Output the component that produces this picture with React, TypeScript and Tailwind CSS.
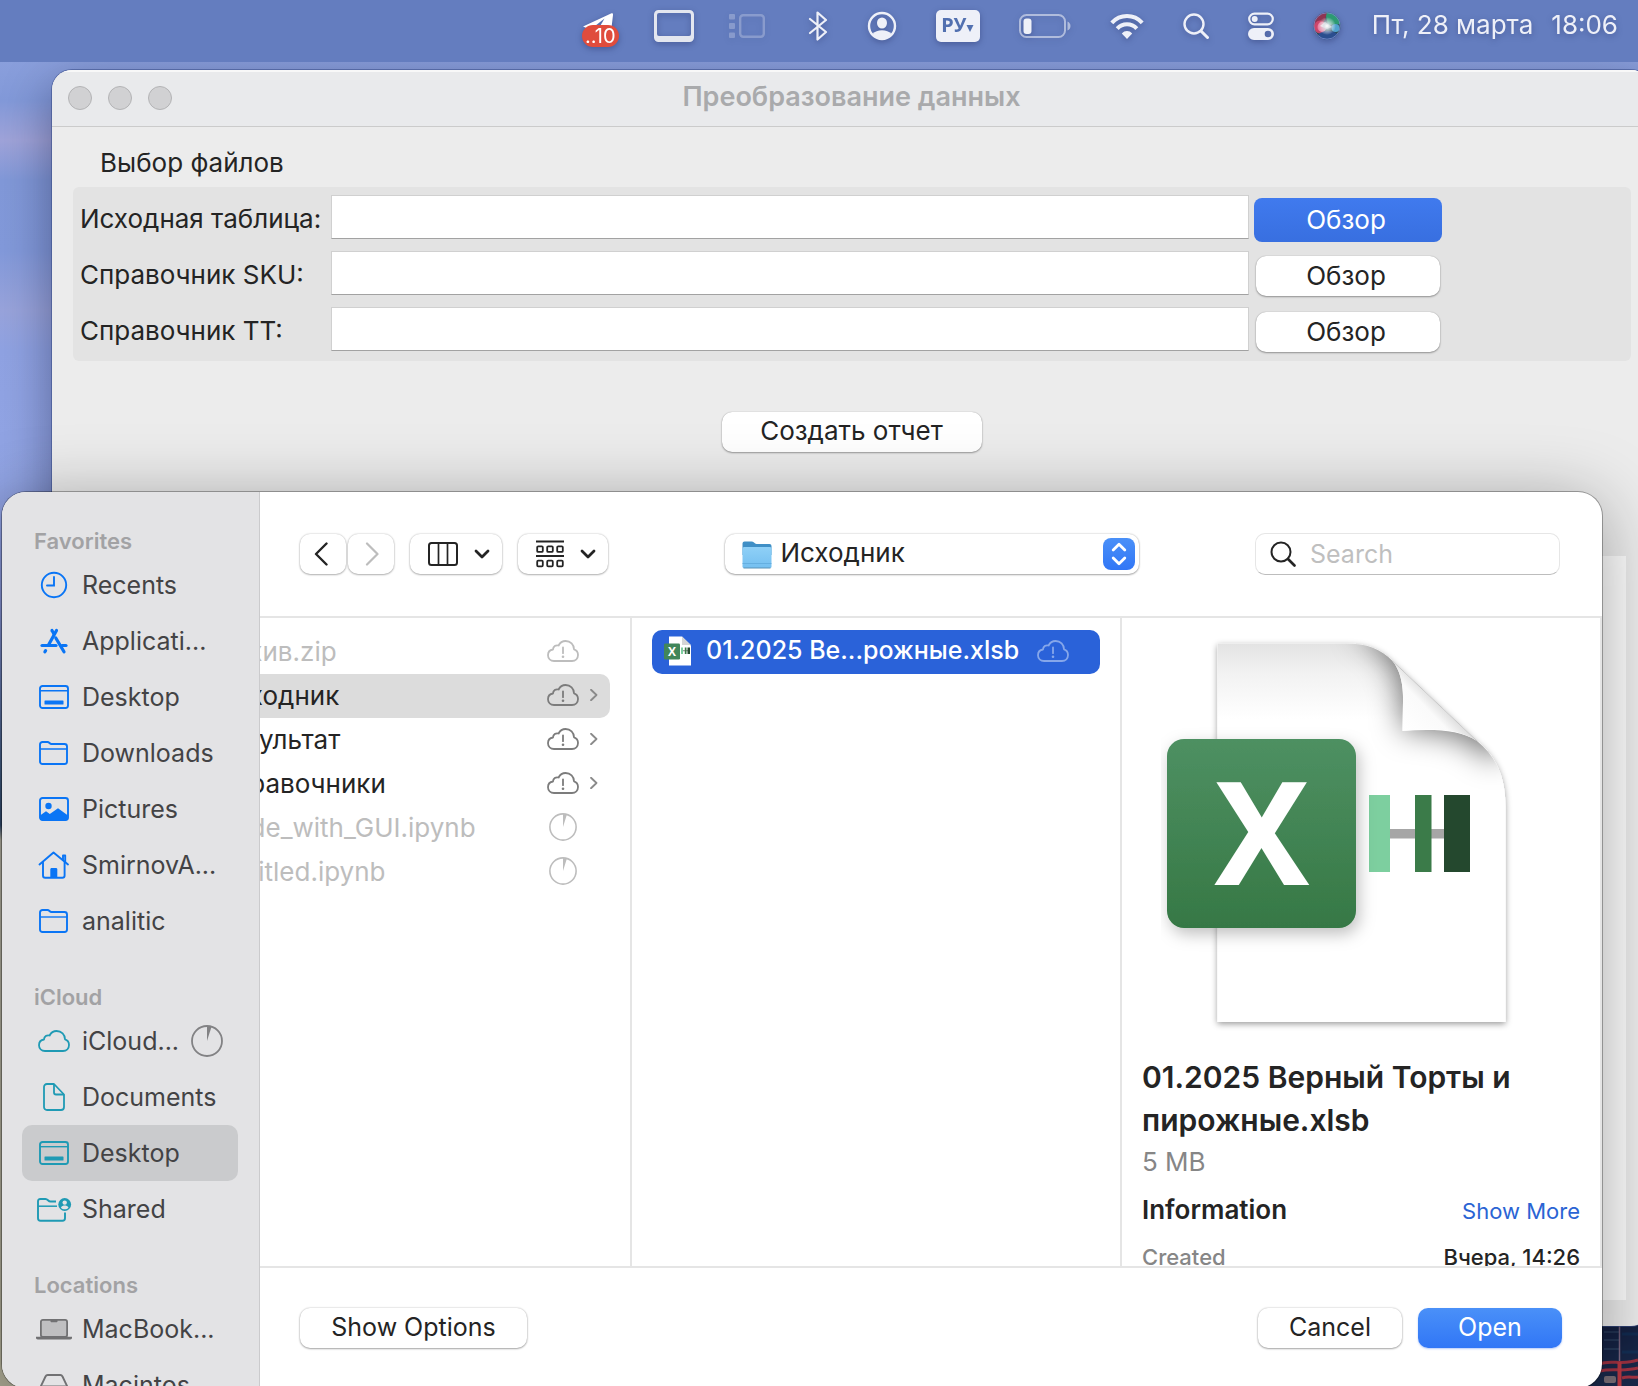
import React from "react";

type IconProps = { className?: string };

function CloudIcon({ className = "", alert = false }: IconProps & { alert?: boolean }) {
  return (
    <svg viewBox="0 0 32 22" className={`h-[22px] w-8 shrink-0 ${className}`} fill="none" stroke="currentColor" strokeWidth="1.8" strokeLinejoin="round" aria-hidden="true">
      <path d="M7 21C3.6 21 1 18.6 1 15.3C1 12.2 3.200 9.900 6 9.500C6.100 6.400 8.700 4.700 11.600 5.500C13 2.600 15.500 1 18.600 1C23.400 1 27 4.500 27 9.300C29.500 10 31 12.300 31 15C31 18.500 28.500 21 25 21Z" />
      {alert && (
        <>
          <path d="M16 7.500V13.200" strokeLinecap="round" />
          <circle cx="16" cy="16.700" r="1.300" fill="currentColor" stroke="none" />
        </>
      )}
    </svg>
  );
}

function PieIcon({ className = "" }: IconProps) {
  return (
    <svg viewBox="0 0 32 32" className={`shrink-0 ${className}`} aria-hidden="true">
      <circle cx="16" cy="16" r="15" fill="none" stroke="currentColor" strokeWidth="1.800" />
      <path d="M16 16V1L20.500 1.800Z" fill="currentColor" />
    </svg>
  );
}

function ClockIcon() {
  return (
    <svg viewBox="0 0 28 28" className="size-7" fill="none" stroke="currentColor" strokeWidth="1.900" strokeLinecap="round" aria-hidden="true">
      <circle cx="14" cy="14" r="12.200" />
      <path d="M14 6V14.500H7" />
    </svg>
  );
}

function AppsIcon() {
  return (
    <svg viewBox="0 0 28 26" className="h-[26px] w-7" fill="none" stroke="currentColor" strokeWidth="3.200" strokeLinecap="round" aria-hidden="true">
      <path d="M16.500 2.500L8.500 17" />
      <path d="M12 2.500L14 6" />
      <path d="M15.800 10L24 23.800" />
      <path d="M2 17.500H16" />
      <path d="M22 17.500H26" />
      <path d="M5.600 22.600L4.900 23.800" />
    </svg>
  );
}

function DesktopIcon() {
  return (
    <svg viewBox="0 0 30 24" className="h-6 w-[30px]" fill="none" stroke="currentColor" strokeWidth="1.900" aria-hidden="true">
      <rect x="1" y="1" width="28" height="22" rx="2.500" />
      <path d="M1 5.700H29" strokeWidth="1.400" />
      <rect x="5.500" y="15.500" width="19" height="4" rx="0.600" fill="currentColor" stroke="none" />
    </svg>
  );
}

function FolderIcon() {
  return (
    <svg viewBox="0 0 30 24" className="h-6 w-[30px]" fill="none" stroke="currentColor" strokeWidth="1.900" strokeLinejoin="round" aria-hidden="true">
      <path d="M1 3.500C1 2 2 1 3.500 1H8.500C10.500 1 10.500 3 12.500 3H25.500C27 3 28 4 28 5.500V20.500C28 22 27 23 25.500 23H3.500C2 23 1 22 1 20.500Z" />
      <path d="M1 8H28" strokeWidth="1.400" />
    </svg>
  );
}

function PictureIcon() {
  return (
    <svg viewBox="0 0 30 24" className="h-6 w-[30px]" aria-hidden="true">
      <rect x="1" y="1" width="28" height="22" rx="2.500" fill="none" stroke="currentColor" strokeWidth="1.900" />
      <circle cx="9.500" cy="9" r="3.200" fill="currentColor" />
      <path d="M1 18.500L7 14.300L10.800 17L19 11.200L29 18.500V21C29 22.300 28 23.300 26.700 23.300H3.300C2 23.300 1 22.300 1 21Z" fill="currentColor" />
    </svg>
  );
}

function HomeIcon() {
  return (
    <svg viewBox="0 0 32 28" className="h-7 w-8" fill="none" stroke="currentColor" strokeWidth="1.900" strokeLinejoin="round" strokeLinecap="round" aria-hidden="true">
      <path d="M1.500 13.500L15.500 1.500L30 13.500" />
      <path d="M25 9V4.500H27.200V11" />
      <path d="M5 11.500V24.500C5 25.800 5.800 26.800 7.200 26.800H24.300C25.700 26.800 26.600 25.800 26.600 24.500V11.500" />
      <path d="M12.300 26.500V18.500C12.300 17.500 12.800 17 13.800 17H17.800C18.800 17 19.300 17.500 19.300 18.500V26.500Z" fill="currentColor" stroke="none" />
    </svg>
  );
}

function DocumentIcon() {
  return (
    <svg viewBox="0 0 22 28" className="h-7 w-[22px]" fill="none" stroke="currentColor" strokeWidth="1.800" strokeLinejoin="round" aria-hidden="true">
      <path d="M1 4C1 2.200 2.200 1 4 1H11L21 11.500V24C21 25.800 19.800 27 18 27H4C2.200 27 1 25.800 1 24Z" />
      <path d="M11 1V9.500C11 10.800 11.700 11.500 13 11.500H21" />
    </svg>
  );
}

function SharedIcon() {
  return (
    <svg viewBox="0 0 36 26" className="h-[26px] w-9" fill="none" stroke="currentColor" strokeWidth="1.900" strokeLinejoin="round" aria-hidden="true">
      <path d="M20 5.500H14.500C12 5.500 12 3 9.500 3H4.500C2.700 3 2 4 2 5.500V22C2 23.800 3 24.800 4.500 24.800H26.500C28.200 24.800 29 23.800 29 22V16.500" />
      <path d="M2 10.200H21" strokeWidth="1.500" />
      <circle cx="28.700" cy="8.500" r="6.400" fill="currentColor" stroke="none" />
      <circle cx="28.700" cy="6.600" r="2.200" fill="#e3e3e5" stroke="none" />
      <path d="M24.900 11.700C25.800 9.900 27.200 9.500 28.700 9.500S31.600 9.900 32.500 11.700C31.400 12.800 30.200 13.200 28.700 13.200S26 12.800 24.900 11.700Z" fill="#e3e3e5" stroke="none" />
    </svg>
  );
}

function LaptopIcon() {
  return (
    <svg viewBox="0 0 38 22" className="h-[22px] w-[38px]" aria-hidden="true">
      <rect x="5.900" y="1.900" width="26.200" height="17" rx="2" fill="#bfbfc1" stroke="#717173" strokeWidth="1.800" />
      <path d="M15.500 1.500H22.500V3.200C22.500 4 22 4.300 21.300 4.300H16.700C16 4.300 15.500 4 15.500 3.200Z" fill="#717173" />
      <path d="M1 18.800H37V19.800C37 20.800 36.300 21.400 35.300 21.400H2.700C1.700 21.400 1 20.800 1 19.800Z" fill="#717173" />
    </svg>
  );
}

function DriveIcon() {
  return (
    <svg viewBox="0 0 30 22" className="h-[22px] w-[30px]" fill="none" stroke="#717173" strokeWidth="1.900" strokeLinejoin="round" aria-hidden="true">
      <path d="M1.500 13L6.500 2.500C7 1.500 7.500 1 8.700 1H21.300C22.500 1 23 1.500 23.500 2.500L28.500 13" />
      <rect x="1.200" y="12.500" width="27.600" height="8.500" rx="2.500" />
    </svg>
  );
}

function Chevron({ className = "", d, w }: { className?: string; d: string; w: number }) {
  return (
    <svg viewBox="0 0 16 24" className={className} fill="none" stroke="currentColor" strokeWidth={w} strokeLinecap="round" strokeLinejoin="round" aria-hidden="true">
      <path d={d} />
    </svg>
  );
}

function DownIcon() {
  return (
    <svg viewBox="0 0 16 10" className="h-2.5 w-4" fill="none" stroke="currentColor" strokeWidth="2.800" strokeLinecap="round" strokeLinejoin="round" aria-hidden="true">
      <path d="M2 2L8 8L14 2" />
    </svg>
  );
}

function SearchIcon({ className = "", w = 2.2 }: IconProps & { w?: number }) {
  return (
    <svg viewBox="0 0 26 26" className={className} fill="none" stroke="currentColor" strokeWidth={w} strokeLinecap="round" aria-hidden="true">
      <circle cx="11" cy="11" r="9.500" />
      <path d="M18 18L24.500 24.500" strokeWidth={w + 0.6} />
    </svg>
  );
}

function MenuBar() {
  return (
    <header className="relative z-10 flex h-[62px] items-start justify-end bg-[#647dbf] pr-5 text-[#eef0f8]">
      <div className="flex h-[52px] items-center gap-[39px] drop-shadow-[0_2px_3px_rgba(20,30,80,0.35)]">
        <button aria-label="Telegram" className="relative -mr-1 h-9 w-[37px]">
          <svg viewBox="0 0 37 36" className="h-9 w-[37px]" aria-hidden="true">
            <path d="M1 18.500L29 5.500C30.500 4.900 31.200 5.500 31 7L29 24H14Z" fill="#fff" />
            <path d="M13 18L22.500 10.500L17 20Z" fill="#5470b0" />
          </svg>
          <span className="absolute inset-x-0 bottom-[-3px] h-[22px] rounded-full bg-[#e04c3c] text-center text-[20px] leading-[22px] text-white">..10</span>
        </button>
        <button aria-label="Дисплей">
          <svg viewBox="0 0 40 32" className="h-8 w-10" aria-hidden="true">
            <path fillRule="evenodd" d="M4.500 0H35.500A4.500 4.500 0 0 1 40 4.500V27.500A4.500 4.500 0 0 1 35.500 32H4.500A4.500 4.500 0 0 1 0 27.500V4.500A4.500 4.500 0 0 1 4.500 0ZM5 3Q3 3 3 5V24Q3 26 5 26H35Q37 26 37 24V5Q37 3 35 3Z" fill="#e3e6ef" />
          </svg>
        </button>
        <button aria-label="Диспетчер окон" className="mr-1 -ml-1 opacity-25">
          <svg viewBox="0 0 36 26" className="h-[26px] w-9" aria-hidden="true">
            <rect x="0" y="1" width="6" height="5.500" rx="1" fill="#fff" />
            <rect x="0" y="10" width="6" height="6" rx="1" fill="#fff" />
            <rect x="0" y="19.500" width="6" height="5.500" rx="1" fill="#fff" />
            <rect x="11.200" y="2.200" width="23.600" height="21.600" rx="3" fill="none" stroke="#fff" strokeWidth="2.400" />
          </svg>
        </button>
        <button aria-label="Bluetooth">
          <svg viewBox="0 0 20 30" className="h-[30px] w-5" fill="none" stroke="currentColor" strokeWidth="2.200" strokeLinejoin="round" strokeLinecap="round" aria-hidden="true">
            <path d="M2 8L18 21L9.500 28.500V1.500L18 9L2 22" />
          </svg>
        </button>
        <button aria-label="Пользователь">
          <svg viewBox="0 0 30 30" className="size-[30px]" aria-hidden="true">
            <circle cx="15" cy="15" r="13" fill="none" stroke="currentColor" strokeWidth="2.400" />
            <ellipse cx="15" cy="12" rx="5" ry="5.600" fill="currentColor" />
            <path d="M5.500 23C8 20.500 11 19.300 15 19.300S22 20.500 24.500 23C22 26.500 19 27.500 15 27.500S8 26.500 5.500 23Z" fill="currentColor" />
          </svg>
        </button>
        <button aria-label="Раскладка клавиатуры" className="flex h-8 w-11 items-center justify-center rounded-[5px] bg-[#eef0f8] pb-0.5 font-['Noto_Sans',sans-serif] text-[20px] font-bold text-[#5270b0]">
          <span>РУ</span>
          <svg viewBox="0 0 8 8" className="mt-1.5 size-2" aria-hidden="true"><path d="M0.500 1H7.500L4 8Z" fill="currentColor" /></svg>
        </button>
        <button aria-label="Батарея">
          <svg viewBox="0 0 52 26" className="h-[26px] w-[52px]" aria-hidden="true">
            <rect x="1" y="2" width="45" height="22" rx="6.500" fill="none" stroke="#fff" strokeOpacity="0.5" strokeWidth="2" />
            <path d="M48.500 8.500Q51.500 10 51.500 13T48.500 17.500Z" fill="#fff" fillOpacity="0.5" />
            <rect x="4.500" y="5.500" width="8" height="15.500" rx="3" fill="currentColor" />
          </svg>
        </button>
        <button aria-label="Wi-Fi">
          <svg viewBox="0 0 34 26" className="h-[26px] w-[34px]" fill="none" stroke="currentColor" strokeWidth="4" aria-hidden="true">
            <path d="M1.800 9.800C10 0.800 24 0.800 32.200 9.800" />
            <path d="M7.200 15.600C12.500 9.800 21.500 9.800 26.800 15.600" />
            <path d="M17 26L11.800 20.500C14.500 17.200 19.500 17.200 22.200 20.500Z" fill="currentColor" stroke="none" />
          </svg>
        </button>
        <button aria-label="Поиск">
          <SearchIcon className="size-[26px]" w={2.4} />
        </button>
        <button aria-label="Пункт управления">
          <svg viewBox="0 0 26 28" className="h-7 w-[26px]" aria-hidden="true">
            <rect x="1.200" y="1.700" width="23.600" height="10.600" rx="5.300" fill="none" stroke="currentColor" strokeWidth="2.200" />
            <circle cx="6.700" cy="7" r="3" fill="currentColor" />
            <path fillRule="evenodd" d="M6 16H20A6 6 0 0 1 20 28H6A6 6 0 0 1 6 16ZM20 18.700A3.300 3.300 0 1 0 20 25.300A3.300 3.300 0 1 0 20 18.700Z" fill="currentColor" />
          </svg>
        </button>
        <button aria-label="Siri">
          <svg viewBox="0 0 28 28" className="size-7" aria-hidden="true">
            <defs>
              <radialGradient id="orb-glow" cx="50%" cy="50%" r="50%">
                <stop offset="0" stopColor="#fff" />
                <stop offset="0.350" stopColor="#d9e4e8" stopOpacity="0.800" />
                <stop offset="1" stopColor="#fff" stopOpacity="0" />
              </radialGradient>
              <clipPath id="orb"><circle cx="14" cy="14" r="13.500" /></clipPath>
            </defs>
            <g clipPath="url(#orb)">
              <rect width="28" height="28" fill="#2b4a58" />
              <path d="M12 0H28V12L15 13Z" fill="#2d9a72" />
              <path d="M0 14A14 14 0 0 1 14 0L12 8L4 20Z" fill="#8e3552" />
              <ellipse cx="7" cy="15" rx="6" ry="6.500" fill="#d8486f" fillOpacity="0.850" />
              <ellipse cx="9" cy="15" rx="4.500" ry="5" fill="#f08fb0" fillOpacity="0.800" />
              <ellipse cx="15" cy="24" rx="10" ry="5" fill="#2c4f9c" fillOpacity="0.800" />
              <ellipse cx="22.500" cy="16" rx="4" ry="4" fill="#58b2e4" fillOpacity="0.850" />
              <path d="M12 10L19 15L14 17L7 14Z" fill="#fff" fillOpacity="0.700" />
              <circle cx="14" cy="14" r="9" fill="url(#orb-glow)" />
            </g>
            <circle cx="14" cy="14" r="13.200" fill="none" stroke="#7a8fd0" strokeWidth="0.800" />
          </svg>
        </button>
        <div className="-ml-2 flex gap-[18px] pb-0.5 text-[26px] leading-[30px]">
          <span>Пт, 28 марта</span>
          <span>18:06</span>
        </div>
      </div>
    </header>
  );
}

const fileFields = [
  { id: "source", label: "Исходная таблица:", primary: true },
  { id: "sku", label: "Справочник SKU:", primary: false },
  { id: "tt", label: "Справочник ТТ:", primary: false },
];

function AppWindow() {
  return (
    <section className="absolute top-[70px] -right-[13px] bottom-[60px] left-[52px] flex flex-col overflow-hidden rounded-[20px] bg-[#ececec] shadow-[0_0_0_1px_rgba(60,80,140,0.6),0_16px_50px_rgba(0,0,30,0.4)]">
      <div className="relative flex h-[57px] items-center border-b border-[#cbcbcb] bg-[#e9eaec] px-4 shadow-[inset_0_2px_0_#f8f8f8]">
        <div className="flex gap-4">
          <button aria-label="Закрыть" className="size-6 rounded-full border border-[#b3b3b5] bg-[#d1d1d3]" />
          <button aria-label="Свернуть" className="size-6 rounded-full border border-[#b3b3b5] bg-[#d1d1d3]" />
          <button aria-label="Развернуть" className="size-6 rounded-full border border-[#b3b3b5] bg-[#d1d1d3]" />
        </div>
        <h1 className="mr-[104px] flex-1 pb-0.5 text-center text-[27px] leading-8 font-semibold text-[#a9aaac]">Преобразование данных</h1>
      </div>
      <form className="flex min-h-0 flex-1 flex-col pt-5" onSubmit={(e) => e.preventDefault()}>
        <h2 className="pl-12 text-[26px] leading-8 text-[#242424]">Выбор файлов</h2>
        <div className="mt-2 mr-5 ml-[21px] rounded-md bg-[#e3e3e3] pt-0.5 pb-1 pl-[7px]">
          {fileFields.map((f) => (
            <div key={f.id} className="flex h-14 items-center">
              <label htmlFor={f.id} className="w-[251px] shrink-0 pt-1 text-[26px] leading-8 whitespace-nowrap text-[#242424]">
                {f.label}
              </label>
              <input id={f.id} type="text" className="h-11 min-w-0 flex-1 border border-[#d0d0d0] border-b-[#a2a2a2] bg-white px-2 text-[26px] outline-none" />
              <div className="mr-[189px] ml-[5px] flex w-[188px] shrink-0 justify-center pt-1.5">
                {f.primary ? (
                  <button type="button" className="h-11 w-full rounded-lg bg-linear-to-b from-[#407aee] to-[#386fe0] pr-1 pb-0.5 text-[26px] text-white">Обзор</button>
                ) : (
                  <button type="button" className="h-10 w-[184px] rounded-[10px] bg-white pr-1 pb-0.5 text-[26px] text-[#242424] shadow-[0_1px_2px_rgba(0,0,0,0.35),0_0_1px_rgba(0,0,0,0.3)]">Обзор</button>
                )}
              </div>
            </div>
          ))}
        </div>
        <button type="submit" className="mt-[51px] h-10 w-[260px] shrink-0 self-center rounded-[10px] bg-white pb-0.5 text-[26px] leading-8 text-[#242424] shadow-[0_1px_2px_rgba(0,0,0,0.35),0_0_1px_rgba(0,0,0,0.3)]">
          Создать отчет
        </button>
        <div className="mt-[104px] mr-[25px] mb-[26px] ml-[21px] flex-1 bg-[#fdfdfd]" />
      </form>
    </section>
  );
}

type Place = { name: string; icon: React.ReactNode; selected?: boolean; syncing?: boolean };
const places: { title: string; color: string; items: Place[] }[] = [
  {
    title: "Favorites",
    color: "text-[#0a75f5]",
    items: [
      { name: "Recents", icon: <ClockIcon /> },
      { name: "Applicati...", icon: <AppsIcon /> },
      { name: "Desktop", icon: <DesktopIcon /> },
      { name: "Downloads", icon: <FolderIcon /> },
      { name: "Pictures", icon: <PictureIcon /> },
      { name: "SmirnovA...", icon: <HomeIcon /> },
      { name: "analitic", icon: <FolderIcon /> },
    ],
  },
  {
    title: "iCloud",
    color: "text-[#1f9ab4]",
    items: [
      { name: "iCloud...", icon: <CloudIcon />, syncing: true },
      { name: "Documents", icon: <DocumentIcon /> },
      { name: "Desktop", icon: <DesktopIcon />, selected: true },
      { name: "Shared", icon: <SharedIcon /> },
    ],
  },
  {
    title: "Locations",
    color: "text-[#717173]",
    items: [
      { name: "MacBook...", icon: <LaptopIcon /> },
      { name: "Macintos...", icon: <DriveIcon /> },
    ],
  },
];

function Sidebar() {
  return (
    <nav className="flex w-[258px] shrink-0 flex-col gap-[30px] overflow-hidden border-r border-[#cbcbcd] bg-[#e3e3e5] pt-[31px] pr-[21px] pl-5">
      {places.map((group) => (
        <section key={group.title} className="shrink-0">
          <h2 className="h-[34px] pt-px pl-3 text-[22px] leading-[34px] font-semibold text-[#a2a2a4]">{group.title}</h2>
          <ul>
            {group.items.map((p) => (
              <li key={p.name}>
                <button className={`flex h-14 w-full items-center gap-2 rounded-[10px] pl-3 text-[25px] text-[#434345] ${p.selected ? "bg-[#cacbcd]" : ""}`}>
                  <span className={`flex w-10 shrink-0 justify-center ${group.color}`}>{p.icon}</span>
                  <span className="pt-0.5 whitespace-nowrap">{p.name}</span>
                  {p.syncing && <PieIcon className="ml-1 size-8 text-[#828284]" />}
                </button>
              </li>
            ))}
          </ul>
        </section>
      ))}
    </nav>
  );
}

const toolButton = "flex h-10 items-center justify-center rounded-[10px] bg-white text-[#242424] shadow-[0_1px_2px_rgba(0,0,0,0.25),0_0_2px_rgba(0,0,0,0.25)]";

function Toolbar() {
  return (
    <div className="flex h-[124px] shrink-0 items-center justify-between pr-[42px] pl-10">
      <div className="flex items-center gap-4">
        <div className="flex gap-0.5">
          <button aria-label="Back" className={`${toolButton} w-[46px]`}>
            <Chevron className="-ml-1 h-6 w-4" d="M13.500 1.500L3 12L13.500 22.500" w={2.4} />
          </button>
          <button aria-label="Forward" className={`${toolButton} w-[46px]`}>
            <Chevron className="ml-0.5 h-6 w-4 text-[#bdbdbd]" d="M3 1.500L13.500 12L3 22.500" w={2.2} />
          </button>
        </div>
        <button aria-label="View as columns" className={`${toolButton} w-[92px] gap-4 pl-1.5`}>
          <svg viewBox="0 0 30 24" className="h-6 w-[30px]" fill="none" stroke="currentColor" strokeWidth="2" aria-hidden="true">
            <rect x="1" y="1" width="28" height="22" rx="2.500" />
            <path d="M10.500 1V23M19.500 1V23" strokeWidth="1.700" />
          </svg>
          <DownIcon />
        </button>
        <button aria-label="Group items" className={`${toolButton} w-[90px] gap-4 pl-1.5`}>
          <svg viewBox="0 0 28 28" className="size-7" fill="none" stroke="currentColor" strokeWidth="1.800" aria-hidden="true">
            <path d="M0 1.500H28M0 16H28" />
            <rect x="1.200" y="6.300" width="5.600" height="5.600" rx="1" />
            <rect x="11.200" y="6.300" width="5.600" height="5.600" rx="1" />
            <rect x="21.200" y="6.300" width="5.600" height="5.600" rx="1" />
            <rect x="1.200" y="20.700" width="5.600" height="5.600" rx="1" />
            <rect x="11.200" y="20.700" width="5.600" height="5.600" rx="1" />
            <rect x="21.200" y="20.700" width="5.600" height="5.600" rx="1" />
          </svg>
          <DownIcon />
        </button>
      </div>
      <div className="relative h-10 w-[414px]">
        <select aria-label="Folder" className="h-10 w-full appearance-none rounded-[10px] bg-white pr-10 pb-0.5 pl-14 text-[26px] leading-9 text-[#242424] shadow-[0_1px_2px_rgba(0,0,0,0.3),0_0_2px_rgba(0,0,0,0.25)] outline-none">
          <option>Исходник</option>
        </select>
        <svg viewBox="0 0 30 28" className="pointer-events-none absolute top-[7px] left-[17px] h-7 w-[30px]" aria-hidden="true">
          <defs>
            <linearGradient id="folder-front" x1="0" y1="0" x2="0" y2="1">
              <stop offset="0" stopColor="#8fd0f7" />
              <stop offset="1" stopColor="#74bff0" />
            </linearGradient>
          </defs>
          <path d="M0.500 2.500Q0.500 0.500 2.500 0.500H9.500Q11 0.500 12 1.500T14.500 3H27.500Q29.500 3 29.500 5V14H0.500Z" fill="#3f8fc6" />
          <rect x="0.500" y="6" width="29" height="21" rx="1.500" fill="url(#folder-front)" />
          <path d="M0.500 22.500H29.500" stroke="#5fa9dc" strokeWidth="0.800" />
          <path d="M1.500 27H28.500" stroke="#5a93b8" strokeWidth="1" />
        </svg>
        <span className="pointer-events-none absolute top-1 right-1 flex size-8 items-center justify-center rounded-lg bg-linear-to-b from-[#4a90f8] to-[#3176f6]">
          <svg viewBox="0 0 16 24" className="h-6 w-4" fill="none" stroke="#fff" strokeWidth="2.800" strokeLinecap="round" strokeLinejoin="round" aria-hidden="true">
            <path d="M2.200 8L8 2.200L13.800 8M2.200 16L8 21.800L13.800 16" />
          </svg>
        </span>
      </div>
      <label className="flex h-[42px] w-[305px] items-center gap-3.5 rounded-[10px] border border-[#e6e6e6] border-b-[#bdbdbd] bg-white pl-3.5 text-[#242424]">
        <SearchIcon className="size-[26px] shrink-0" w={2} />
        <input type="search" aria-label="Search" placeholder="Search" className="min-w-0 flex-1 bg-transparent pt-0.5 text-[25px] outline-none placeholder:text-[#bfbfbf]" />
      </label>
    </div>
  );
}

const entries = [
  { name: "Архив.zip", kind: "zip" },
  { name: "Исходник", kind: "folder", selected: true },
  { name: "Результат", kind: "folder" },
  { name: "Справочники", kind: "folder" },
  { name: "Code_with_GUI.ipynb", kind: "sync" },
  { name: "Untitled.ipynb", kind: "sync" },
];

function FolderColumn() {
  return (
    <div className="w-[372px] shrink-0 overflow-hidden border-r-2 border-[#e5e5e5] pt-3 pr-5">
      <ul className="-ml-[94px]">
        {entries.map((e) => (
          <li key={e.name}>
            <button
              className={`flex h-11 w-full items-center rounded-[10px] pb-0.5 pl-[49px] text-left text-[26px] ${e.selected ? "bg-[#dcdcdc]" : ""} ${e.kind === "folder" ? "text-[#242424]" : "text-[#bdbdbd]"}`}
            >
              <span className="flex-1 whitespace-nowrap">{e.name}</span>
              {e.kind === "sync" ? (
                <PieIcon className="mr-[33px] size-7" />
              ) : (
                <CloudIcon alert className={e.kind === "folder" ? "text-[#7c7c7c]" : ""} />
              )}
              {e.kind === "folder" && <Chevron className="mr-3 ml-[11px] h-3 w-2 text-[#8a8a8a]" d="M2 1.500L13 12L2 22.500" w={3.6} />}
              {e.kind === "zip" && <span className="w-[31px]" />}
            </button>
          </li>
        ))}
      </ul>
    </div>
  );
}

function FileColumn() {
  return (
    <div className="min-w-0 flex-1 border-r-2 border-[#e5e5e5] px-5 pt-3">
      <button className="flex h-11 w-full items-center rounded-[10px] bg-[#2a62d9] pb-0.5 pl-3 text-[25px] font-medium text-white">
        <svg viewBox="0 0 28 30" className="h-[30px] w-7 shrink-0" aria-hidden="true">
          <path d="M5 0.500H18L27 9.500V29.500H5Z" fill="#fff" />
          <path d="M18 0.500V9H27Z" fill="#d5d5d5" />
          <rect x="17" y="11.500" width="2" height="6.500" fill="#7dcf9f" />
          <rect x="19" y="14" width="5" height="1.300" fill="#9a9a9a" />
          <rect x="20.800" y="11.500" width="1.700" height="6.500" fill="#3b7b49" />
          <rect x="23.500" y="11.500" width="2.500" height="6.500" fill="#24482e" />
          <rect x="0" y="7.500" width="16" height="16" rx="1.200" fill="#41865a" />
          <text x="8" y="19.700" textAnchor="middle" fontSize="12" fontWeight="700" fontFamily="Open Sans, sans-serif" fill="#fff">X</text>
        </svg>
        <span className="ml-3.5 whitespace-nowrap">01.2025 Ве...рожные.xlsb</span>
        <CloudIcon alert className="ml-[18px] text-[#86a7ea]" />
      </button>
    </div>
  );
}

function PreviewArt() {
  return (
    <svg viewBox="0 0 400 400" className="mx-auto mt-3.5 size-[400px]" role="img" aria-label="Excel document">
      <defs>
        <linearGradient id="page" x1="0" y1="0" x2="0" y2="1">
          <stop offset="0" stopColor="#e3e3e3" />
          <stop offset="0.080" stopColor="#f2f2f2" />
          <stop offset="0.200" stopColor="#fff" />
        </linearGradient>
        <linearGradient id="tile" x1="0" y1="0" x2="0" y2="1">
          <stop offset="0" stopColor="#4e9062" />
          <stop offset="1" stopColor="#367845" />
        </linearGradient>
        <linearGradient id="curl" gradientUnits="userSpaceOnUse" x1="242" y1="98" x2="275" y2="66">
          <stop offset="0" stopColor="#fff" />
          <stop offset="0.700" stopColor="#fafafa" />
          <stop offset="1" stopColor="#dcdcdc" />
        </linearGradient>
        <clipPath id="page-clip">
          <path d="M56.500 11.500H185C206 11.500 220 17 231.500 29C239 38 242.500 52 242 70L241.500 99C270 97 298 97 316 109C336 125 344.500 146 344.500 175V390H56.500Z" />
        </clipPath>
        <filter id="soft" x="-50%" y="-50%" width="200%" height="200%"><feGaussianBlur stdDeviation="15" /></filter>
        <filter id="page-shadow" x="-10%" y="-10%" width="120%" height="120%"><feDropShadow dx="0" dy="2" stdDeviation="3" floodOpacity="0.400" /></filter>
        <filter id="tile-shadow" x="-20%" y="-20%" width="140%" height="140%"><feDropShadow dx="3" dy="6" stdDeviation="8" floodOpacity="0.250" /></filter>
      </defs>
      <g filter="url(#page-shadow)">
        <path d="M56.500 11.500H185C206 11.500 220 17 231.500 29L316 109C336 125 344.500 146 344.500 175V390H56.500Z" fill="#fff" />
      </g>
      <g clipPath="url(#page-clip)">
        <rect x="55" y="11" width="290" height="380" fill="url(#page)" />
        <path d="M190 0C222 8 236 34 240 62L242 99C285 96 312 108 332 130L360 90L240 -10Z" fill="#000" fillOpacity="0.550" filter="url(#soft)" />
      </g>
      <path d="M231.500 29C239 38 242.500 52 242 70L241.500 99C271 95 299 97 316 109Z" fill="url(#curl)" />
      <path d="M231.500 29L316 109" stroke="#c8c8c8" strokeWidth="1" />
      <rect x="208" y="163" width="21" height="77" fill="#7dcf9f" />
      <rect x="229" y="197" width="54" height="9.500" fill="#a6a6a6" />
      <rect x="254" y="163" width="16.500" height="77" fill="#3b7b49" />
      <rect x="283" y="163" width="26" height="77" fill="#24482e" />
      <rect x="6" y="107" width="189" height="189" rx="17" fill="url(#tile)" filter="url(#tile-shadow)" />
      <text x="101" y="253" textAnchor="middle" fontSize="143" fontWeight="700" fontFamily="Noto Sans, sans-serif" fill="#fff">X</text>
    </svg>
  );
}

function PreviewColumn() {
  return (
    <div className="w-[480px] shrink-0 overflow-hidden border-r-2 border-[#e5e5e5] text-[#242424]">
      <PreviewArt />
      <div className="px-5 pt-6">
        <h2 className="text-[30px] leading-[43px] font-semibold">01.2025 Верный Торты и пирожные.xlsb</h2>
        <p className="mt-0.5 text-[26px] leading-9 text-[#868686]">5 MB</p>
        <div className="mt-3 flex items-baseline justify-between">
          <h3 className="text-[26px] leading-9 font-semibold">Information</h3>
          <a href="#more" className="text-[22px] leading-9 text-[#2a64d4]">Show More</a>
        </div>
        <dl className="mt-3 flex justify-between text-[22px] leading-8 font-medium">
          <dt className="text-[#868686]">Created</dt>
          <dd>Вчера, 14:26</dd>
        </dl>
      </div>
    </div>
  );
}

function OpenDialog() {
  const plain = "h-10 rounded-[10px] bg-white text-[25px] text-[#242424] shadow-[0_1px_2px_rgba(0,0,0,0.3),0_0_2px_rgba(0,0,0,0.25)]";
  return (
    <section role="dialog" aria-label="Open" className="absolute top-[492px] right-9 -bottom-0.5 left-0.5 flex overflow-hidden rounded-3xl bg-white shadow-[0_0_0_1px_rgba(0,0,0,0.3),0_10px_70px_rgba(0,0,0,0.35)]">
      <Sidebar />
      <div className="flex min-w-0 flex-1 flex-col">
        <Toolbar />
        <div className="flex min-h-0 flex-1 border-y-2 border-[#e5e5e5]">
          <FolderColumn />
          <FileColumn />
          <PreviewColumn />
        </div>
        <div className="flex h-[120px] shrink-0 items-center gap-4 px-10">
          <button className={`${plain} mr-auto w-[227px]`}>Show Options</button>
          <button className={`${plain} w-36`}>Cancel</button>
          <button className="h-10 w-36 rounded-[10px] bg-linear-to-b from-[#4a90f8] to-[#3176f6] text-[25px] text-white shadow-[0_1px_2px_rgba(40,100,240,0.35)]">Open</button>
        </div>
      </div>
    </section>
  );
}

function Wallpaper() {
  return (
    <div className="absolute inset-0 flex flex-col justify-end bg-[linear-gradient(to_bottom,#8a9fdc_60px,#8299d9_100px,#9fa3d9_140px,#8198d8_180px,#8299da_250px,#98a3db_310px,#8fa2e2_350px,#92a5e5_480px,#8390cf_600px,#3c5578_780px,#2f4566_825px,#aaa89a_840px,#aba893_100%)]">
      <svg viewBox="0 0 60 64" className="h-16 w-[60px] self-end" aria-hidden="true">
        <rect width="60" height="64" fill="#1a2a4c" />
        <path d="M26 10H42M26 18H42M26 27H42" stroke="#2c4262" strokeWidth="2" />
        <path d="M44 12H60M44 30H60" stroke="#16355c" strokeWidth="3" />
        <path d="M41.500 0V40" stroke="#8d7590" strokeWidth="1.500" />
        <rect x="26" y="54" width="12" height="7" rx="2" fill="#7b7078" />
        <path d="M22 42C32 37 44 44 60 38M22 49C34 46 46 50 60 46M44 56C50 54 56 56 60 55" stroke="#a83544" strokeWidth="3" fill="none" />
        <path d="M41.500 40V64" stroke="#c23b44" strokeWidth="4" />
      </svg>
    </div>
  );
}

export default function App() {
  return (
    <main className="relative h-screen overflow-hidden font-['Inter',sans-serif]">
      <Wallpaper />
      <MenuBar />
      <AppWindow />
      <OpenDialog />
    </main>
  );
}
